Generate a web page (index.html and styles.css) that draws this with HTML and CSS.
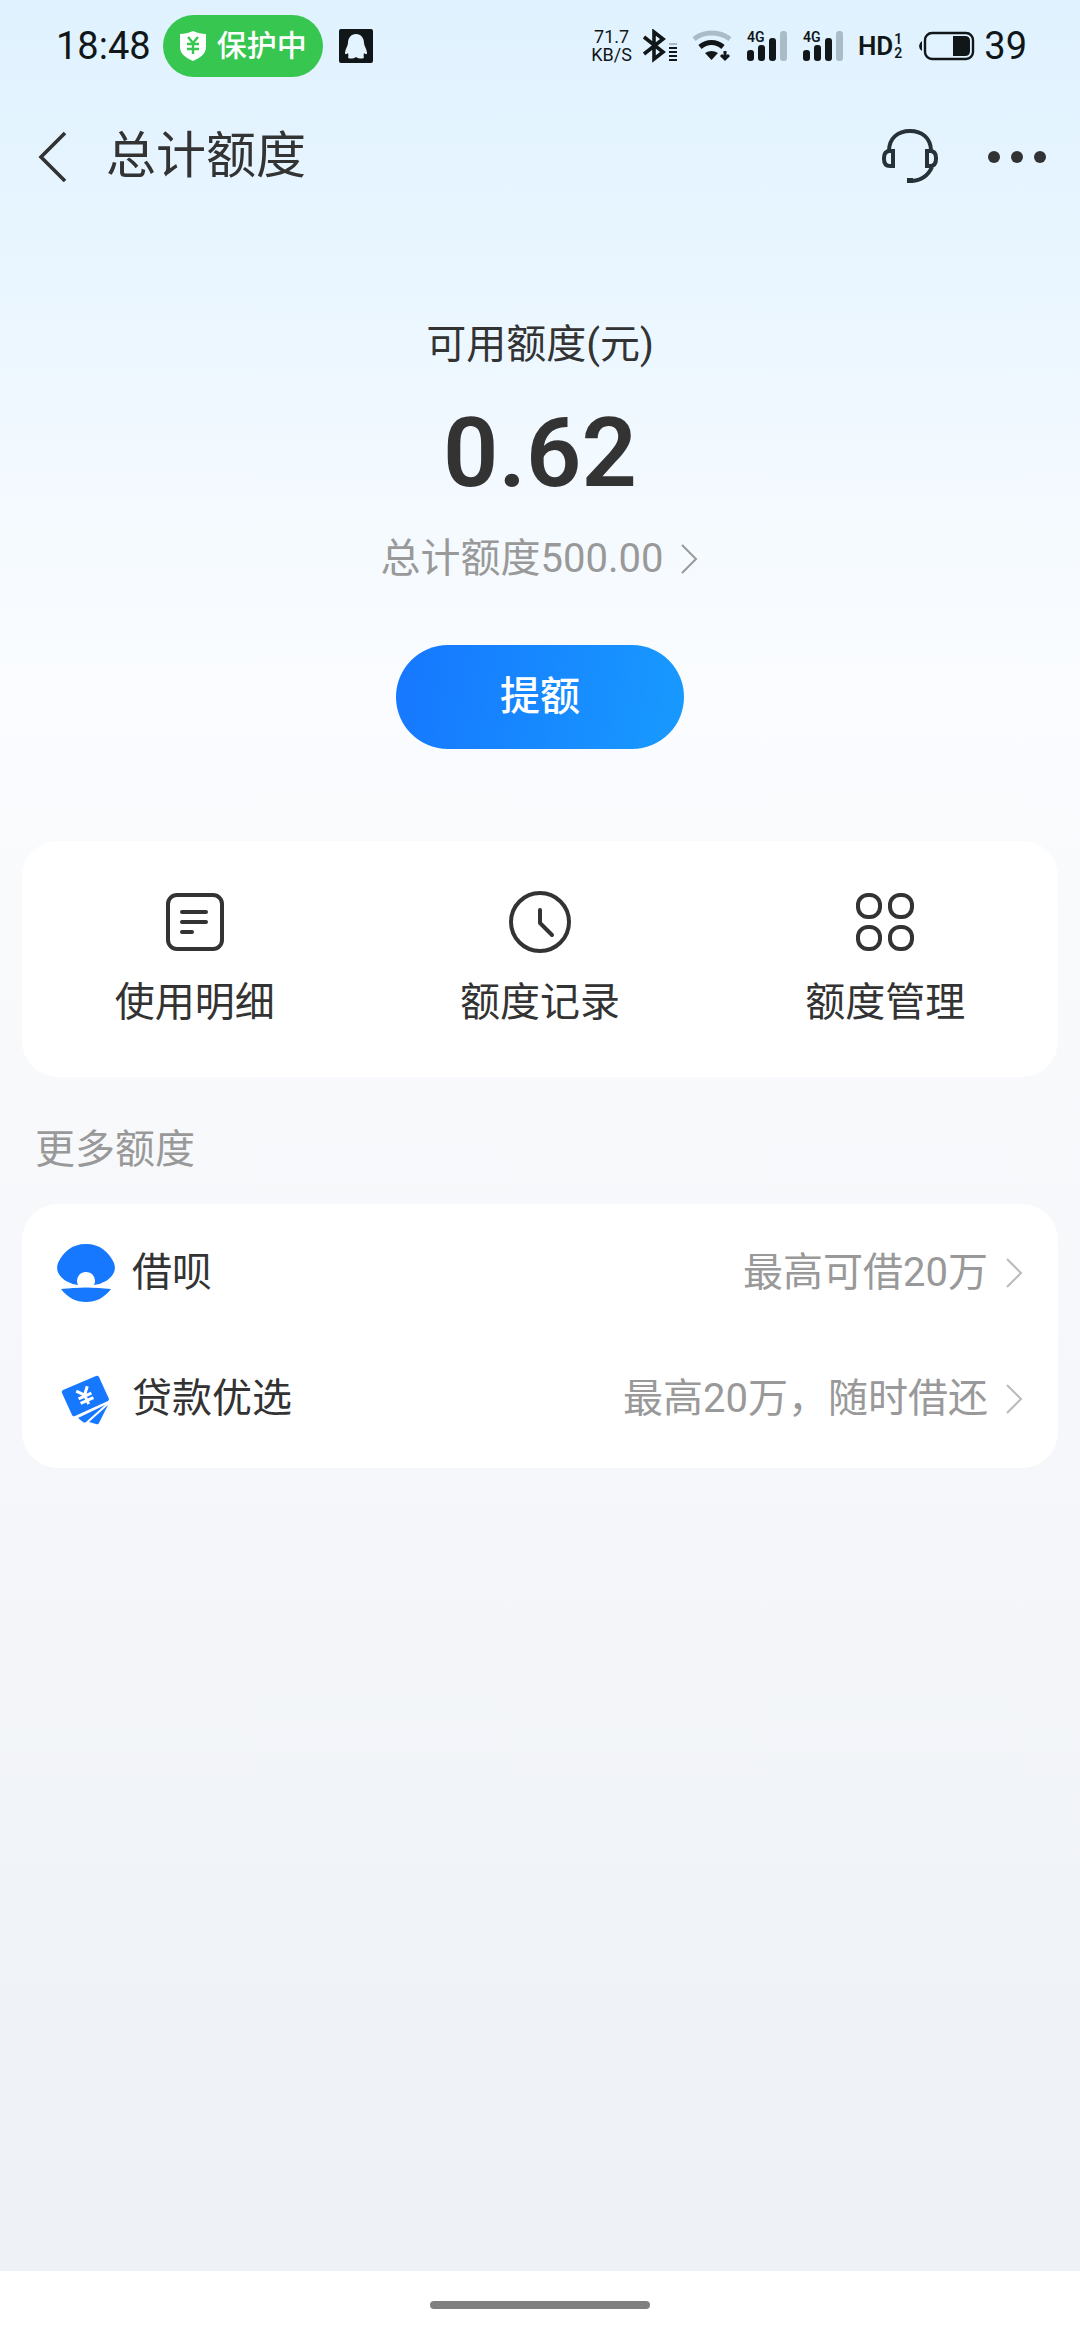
FILE: index.html
```html
<!DOCTYPE html>
<html lang="zh-CN">
<head>
<meta charset="utf-8">
<meta name="viewport" content="width=device-width, initial-scale=1">
<title>总计额度</title>
<link rel="stylesheet" href="styles.css">
</head>
<body>
<div class="screen">
  <div class="status">
    <div class="status-left">
      <span class="status-time">18:48</span>
      <span class="guard">
        <svg width="28" height="32" viewBox="0 0 28 32" aria-hidden="true">
          <path d="M14 1C18 3 23 4 27 4V17C27 24 21 28 14 31C7 28 1 24 1 17V4C5 4 10 3 14 1Z" fill="#fff"/>
          <path d="M9 7L14 13L19 7M8 14H20M8 19H20M14 13V24" fill="none" stroke="#37c650" stroke-width="2.4"/>
        </svg>
        <span>保护中</span>
      </span>
      <svg class="qq" width="34" height="34" viewBox="0 0 34 34" aria-hidden="true">
        <rect width="34" height="34" rx="2" fill="#111719"/>
        <path d="M17 5C22 5 25 9 25 14C25 17 28 20 28 24C28 26 26 25 25 24C25 26 24 27 25 28C25 30 20 30 17 28C14 30 9 30 9 28C10 27 9 26 9 24C8 25 6 26 6 24C6 20 9 17 9 14C9 9 12 5 17 5Z" fill="#e3f3ff"/>
      </svg>
    </div>
    <div class="status-right">
      <span class="speed"><span>71.7</span><span>KB/S</span></span>
      <svg class="bt" width="36" height="34" viewBox="0 0 36 34" fill="none" stroke="#111719" aria-hidden="true">
        <path d="M2 8L21 23L12 30V3L21 10L2 25" stroke-width="3.6"/>
        <path d="M27 19H35M27 23H35M27 27H35M27 31H35" stroke-width="2"/>
        <path d="M27 15H35" stroke-width="2" stroke="#a9bac4"/>
      </svg>
      <svg class="wifi" width="40" height="34" viewBox="0 0 40 34" fill="none" aria-hidden="true">
        <path d="M2 10C12 2 27 2 38 10" stroke="#a9bdc9" stroke-width="5"/>
        <path d="M8 18C15 12 24 12 31 18" stroke="#111719" stroke-width="5"/>
        <path d="M13 24Q19.500 20 26 24L19.500 31Z" fill="#111719"/>
        <path d="M33 22V30M29 26L33 30L37 26" stroke="#111719" stroke-width="3"/>
      </svg>
      <svg class="signal" width="42" height="34" viewBox="0 0 42 34" role="img" aria-label="4G">
        <text x="1" y="13" class="net">4G</text>
        <rect x="1" y="21" width="7" height="11" rx="3"/>
        <rect x="12" y="16" width="7" height="16" rx="3"/>
        <rect x="23" y="9" width="7" height="23" rx="3"/>
        <rect x="34" y="2" width="7" height="30" rx="3" fill="#a9bdc9"/>
      </svg>
      <svg class="signal" width="42" height="34" viewBox="0 0 42 34" role="img" aria-label="4G">
        <text x="1" y="13" class="net">4G</text>
        <rect x="1" y="21" width="7" height="11" rx="3"/>
        <rect x="12" y="16" width="7" height="16" rx="3"/>
        <rect x="23" y="9" width="7" height="23" rx="3"/>
        <rect x="34" y="2" width="7" height="30" rx="3" fill="#a9bdc9"/>
      </svg>
      <span class="hd">HD<span class="hd-nums"><span>1</span><span>2</span></span></span>
      <svg class="battery" width="58" height="30" viewBox="0 0 58 30" aria-hidden="true">
        <path d="M4 10V20Q1 18 1 15T4 10Z" fill="#111719"/>
        <rect x="7" y="2" width="48" height="26" rx="7" fill="none" stroke="#111719" stroke-width="2.4"/>
        <path d="M35 5H47Q52 5 52 10V20Q52 25 47 25H35Z" fill="#111719"/>
      </svg>
      <span class="level">39</span>
    </div>
  </div>

  <header class="nav">
    <button class="icon-button" type="button" aria-label="返回">
      <svg width="32" height="52" viewBox="0 0 32 52" fill="none" stroke="#303234" stroke-width="3.600"><path d="M29 3L5 27L29 51"/></svg>
    </button>
    <h1 class="nav-title">总计额度</h1>
    <button class="icon-button service" type="button" aria-label="客服">
      <svg width="58" height="56" viewBox="0 0 58 56" fill="none" stroke="#263238" stroke-width="4">
        <path d="M8 23C8 10 17 3 29 3S50 10 50 23M51 39C47 48 40 53 29 53"/>
        <path d="M12 23H9Q3 23 3 30V31Q3 38 9 38H12ZM46 23H49Q55 23 55 30V31Q55 38 49 38H46Z"/>
        <rect x="28" y="52" width="2" height="1"/>
      </svg>
    </button>
    <button class="icon-button" type="button" aria-label="更多">
      <svg width="58" height="14" viewBox="0 0 58 14" fill="#303234"><circle cx="6" cy="8" r="6"/><circle cx="29" cy="8" r="6"/><circle cx="52" cy="8" r="6"/></svg>
    </button>
  </header>

  <main class="content">
    <section class="hero">
      <p class="hero-label">可用额度(元)</p>
      <p class="hero-amount">0.62</p>
      <a class="hero-total" href="#total">总计额度500.00
        <svg class="chevron" width="18" height="30" viewBox="0 0 18 30"><path d="M1 1L15 15L1 29"/></svg>
      </a>
      <button class="raise" type="button">提额</button>
    </section>

    <nav class="card shortcuts">
      <a class="shortcut" href="#usage">
        <svg width="64" height="64" viewBox="0 0 64 64">
          <rect x="5" y="5" width="54" height="54" rx="9"/>
          <path d="M19 22H43M19 32H43M19 42H29"/>
        </svg>
        <span>使用明细</span>
      </a>
      <a class="shortcut" href="#records">
        <svg width="64" height="64" viewBox="0 0 64 64">
          <circle cx="32" cy="32" r="29"/>
          <path d="M32 20V33L44 45"/>
        </svg>
        <span>额度记录</span>
      </a>
      <a class="shortcut" href="#manage">
        <svg width="64" height="64" viewBox="0 0 64 64">
          <rect x="5" y="5" width="22" height="22" rx="10"/>
          <rect x="37" y="5" width="22" height="22" rx="10"/>
          <rect x="5" y="37" width="22" height="22" rx="10"/>
          <rect x="37" y="37" width="22" height="22" rx="10"/>
        </svg>
        <span>额度管理</span>
      </a>
    </nav>

    <h2 class="section-title">更多额度</h2>
    <div class="card offers">
      <a class="offer" href="#jiebei">
        <svg width="60" height="60" viewBox="0 0 60 60" fill="#1677ff">
          <path d="M30 1C44 1 53 9 58 20C61 28 56 34 50 38Q45 41 38 42A9 9 0 1 0 22 42Q15 41 10 38C4 34 -1 28 2 20C7 9 16 1 30 1Z"/>
          <path d="M5 46Q30 43 55 46C48 55 40 59 30 59S12 55 5 46Z"/>
        </svg>
        <span class="offer-name">借呗</span>
        <span class="offer-note">最高可借20万</span>
        <svg class="chevron pale" width="18" height="30" viewBox="0 0 18 30"><path d="M1 1L15 15L1 29"/></svg>
      </a>
      <a class="offer" href="#loan">
        <svg width="60" height="60" viewBox="0 0 60 60" fill="#1677ff">
          <path d="M6 24Q5 22 7 21L40 7Q42 6 43 8L53 30Q53 31 52 32L19 47Q17 48 16 46Z"/>
          <path d="M22 49L49 36L30 53Q28 54 27 53Z"/>
          <path d="M33 53L52 36L43 54Q42 56 40 55Z"/>
          <path d="M-6 -8L0 -1L6 -8M-7 0H7M-7 5H7M0 -1V9" transform="translate(29 27) rotate(-24)" fill="none" stroke="#fff" stroke-width="3"/>
        </svg>
        <span class="offer-name">贷款优选</span>
        <span class="offer-note">最高20万，随时借还</span>
        <svg class="chevron pale" width="18" height="30" viewBox="0 0 18 30"><path d="M1 1L15 15L1 29"/></svg>
      </a>
    </div>
  </main>
</div>
<footer class="gesture"><span class="gesture-bar"></span></footer>
</body>
</html>
```
FILE: styles.css
```css
* {
  box-sizing: border-box;
}

body {
  margin: 0;
  min-height: 100vh;
  display: flex;
  flex-direction: column;
  background: #fff;
  color: #333;
  font-family: Roboto, "Noto Sans CJK SC", sans-serif;
  font-size: 40px;
  line-height: 56px;
}

h1, h2, p {
  margin: 0;
  font-weight: 400;
}

a {
  color: inherit;
  text-decoration: none;
}

svg {
  display: block;
  flex: none;
}

button {
  border: 0;
  padding: 0;
  font: inherit;
}

.screen {
  flex: 1;
  background: linear-gradient(180deg, #e0f2ff 0%, #e7f5ff 10%, #f2f9ff 20%, #fafcff 30%, #f9fafc 40%, #f5f7fa 64%, #eff2f7 90%, #eef2f7 100%);
}

/* System status bar */
.status {
  display: flex;
  justify-content: space-between;
  height: 92px;
  padding: 0 53px 0 56px;
  color: #111719;
}

.status-left,
.status-right {
  display: flex;
  align-items: center;
}

.status-time,
.level {
  font-size: 38px;
}

.guard {
  display: flex;
  align-items: center;
  gap: 10px;
  height: 62px;
  margin-left: 12px;
  padding: 0 16px;
  border-radius: 31px;
  background: #37c650;
  color: #fff;
  font-size: 30px;
  font-weight: 500;
}

.qq {
  margin-left: 16px;
}

.speed {
  display: flex;
  flex-direction: column;
  align-items: center;
  font-size: 18px;
  line-height: 18px;
}

.bt {
  margin-left: 10px;
}

.wifi,
.signal,
.hd {
  margin-left: 14px;
}

.signal {
  fill: #111719;
}

.net {
  font-size: 14px;
  font-weight: 600;
}

.hd {
  display: flex;
  align-items: center;
  gap: 1px;
  font-size: 26px;
  font-weight: 600;
}

.hd-nums {
  display: flex;
  flex-direction: column;
  font-size: 14px;
  line-height: 14px;
}

.battery {
  margin: 0 8px 0 16px;
}

/* Title bar */
.nav {
  display: flex;
  align-items: center;
  height: 128px;
  padding: 0 34px 0 36px;
}

.icon-button {
  background: none;
  cursor: pointer;
}

.nav-title {
  flex: 1;
  margin-left: 38px;
  font-size: 50px;
  line-height: 64px;
}

.service {
  margin-right: 49px;
}

/* Available credit */
.hero {
  display: flex;
  flex-direction: column;
  align-items: center;
  padding: 97px 0 92px;
}

.hero-amount {
  margin: 30px 0 28px;
  font-size: 97px;
  font-weight: 600;
  line-height: 100px;
}

.hero-total {
  display: flex;
  align-items: center;
  gap: 18px;
  color: #999;
}

.chevron {
  fill: none;
  stroke: #999;
  stroke-width: 2;
}

.pale {
  stroke: #bbb;
}

.raise {
  width: 288px;
  height: 104px;
  margin-top: 58px;
  border-radius: 52px;
  background: linear-gradient(100deg, #1677ff, #189aff);
  color: #fff;
  font-weight: 500;
  cursor: pointer;
}

/* Cards */
.content {
  padding: 0 22px;
}

.card {
  border-radius: 36px;
  background: #fff;
}

.shortcuts {
  display: grid;
  grid-template-columns: repeat(3, 1fr);
  padding: 49px 0 46px;
}

.shortcut {
  display: flex;
  flex-direction: column;
  align-items: center;
  gap: 21px;
}

.shortcut svg {
  fill: none;
  stroke: #333;
  stroke-width: 4;
  stroke-linecap: round;
  stroke-linejoin: round;
}

.section-title {
  margin: 45px 13px 26px;
  font-size: 40px;
  color: #999;
}

.offers {
  padding: 6px 34px;
}

.offer {
  display: flex;
  align-items: center;
  height: 126px;
}

.offer-name {
  flex: 1;
  margin-left: 16px;
}

.offer-note {
  margin-right: 18px;
  color: #999;
}

/* Home gesture area */
.gesture {
  display: flex;
  justify-content: center;
  padding: 30px 0 31px;
}

.gesture-bar {
  width: 220px;
  height: 8px;
  border-radius: 4px;
  background: #808080;
}
```
